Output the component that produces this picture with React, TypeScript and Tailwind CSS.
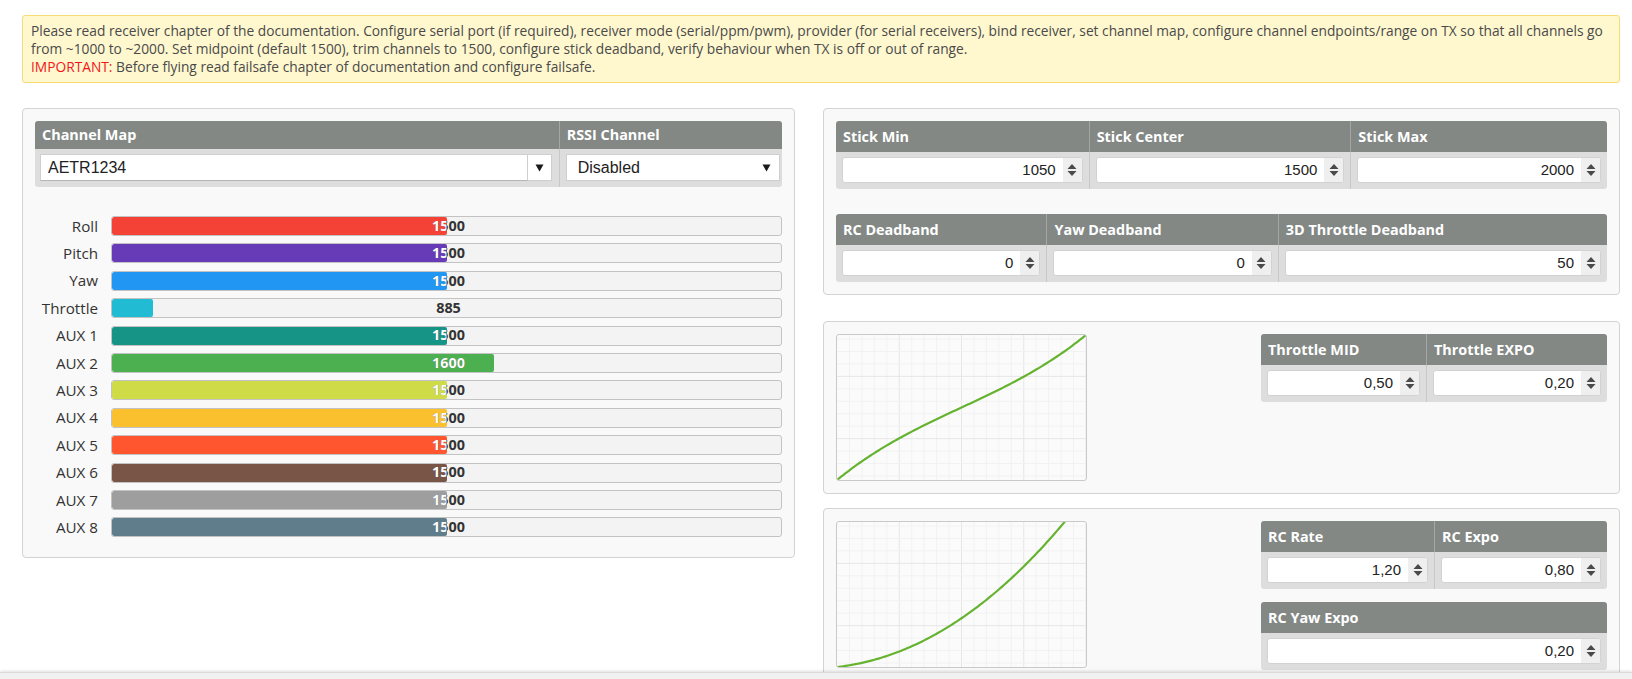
import React from 'react';

const RANGE_MIN = 800;
const RANGE_MAX = 2200;

const channels = [
  { name: 'Roll', value: 1500, color: '#f44336' },
  { name: 'Pitch', value: 1500, color: '#673ab7' },
  { name: 'Yaw', value: 1500, color: '#2196f3' },
  { name: 'Throttle', value: 885, color: '#21bcd4' },
  { name: 'AUX 1', value: 1500, color: '#169486' },
  { name: 'AUX 2', value: 1600, color: '#4caf50' },
  { name: 'AUX 3', value: 1500, color: '#cfdb47' },
  { name: 'AUX 4', value: 1500, color: '#fbc02d' },
  { name: 'AUX 5', value: 1500, color: '#ff5630' },
  { name: 'AUX 6', value: 1500, color: '#795548' },
  { name: 'AUX 7', value: 1500, color: '#9e9e9e' },
  { name: 'AUX 8', value: 1500, color: '#607d8b' },
];

const Spinner = () => (
  <div className="w-[19px] self-stretch bg-[#efefef] flex items-center justify-center">
    <svg width="10" height="14" viewBox="0 0 10 14">
      <path d="M5 1 L9.5 6 H0.5 Z" fill="#4a4a4a" />
      <path d="M0.5 8 H9.5 L5 13 Z" fill="#4a4a4a" />
    </svg>
  </div>
);

const NumInput = ({ value }: { value: string }) => (
  <div className="flex items-center justify-end h-[26px] bg-white border border-[#d2d2d2] rounded-[3px] overflow-hidden">
    <span className="pr-[7px] text-[15px] text-[#222] font-['Liberation_Sans',Arial,sans-serif]">{value}</span>
    <Spinner />
  </div>
);

const Caret = () => (
  <svg width="9" height="8" viewBox="0 0 9 8">
    <path d="M0.5 0.5 H8.5 L4.5 7.5 Z" fill="#1a1a1a" />
  </svg>
);

type Col = { title: string; value: string };

const FieldTable = ({ cols, grid }: { cols: Col[]; grid: string }) => (
  <div className="rounded-[3px] overflow-hidden">
    <div className={`grid ${grid} h-[31px] bg-[#838885]`}>
      {cols.map((c, i) => (
        <div
          key={c.title}
          className={`flex items-center pl-[7px] text-[14.4px] font-bold text-white ${i > 0 ? 'border-l border-[#a3a7a5]' : ''}`}
        >
          {c.title}
        </div>
      ))}
    </div>
    <div className={`grid ${grid} bg-[#dddddd]`}>
      {cols.map((c, i) => (
        <div
          key={c.title}
          className={`pt-[5px] pb-[6px] px-[6px] ${i > 0 ? 'border-l border-[#c8c8c8]' : ''}`}
        >
          <NumInput value={c.value} />
        </div>
      ))}
    </div>
  </div>
);

const ChannelBar = ({ name, value, color }: { name: string; value: number; color: string }) => {
  const pct = ((value - RANGE_MIN) / (RANGE_MAX - RANGE_MIN)) * 100;
  return (
    <div className="flex items-center gap-[13px] h-[20px] mb-[7.4px]">
      <div className="w-[63px] text-right text-[15.2px] text-[#333] whitespace-nowrap">{name}</div>
      <div className="relative flex-1 h-[20px] rounded-[3px] border border-[#c3c3c3] bg-[#f3f3f3] overflow-hidden">
        <div className="absolute left-0 top-0 bottom-0 rounded-[2px]" style={{ width: `${pct}%`, background: color }} />
        <div className="absolute inset-0 flex items-center justify-center pl-[4px] text-[14.4px] font-bold text-[#333] leading-none">
          {value}
        </div>
        <div
          className="absolute inset-0 flex items-center justify-center pl-[4px] text-[14.4px] font-bold text-white leading-none"
          style={{ clipPath: `inset(0 ${100 - pct}% 0 0)` }}
        >
          {value}
        </div>
      </div>
    </div>
  );
};

const W = 249;
const H = 145;
const MAJOR = W / 4;
const MINOR = MAJOR / 5;

const throttleCurve = (x: number) => {
  const mid = 0.5;
  const expo = 0.2;
  const d = x - mid;
  const den = x < mid ? mid * mid : (1 - mid) * (1 - mid);
  return mid + d * (1 - expo + (expo * d * d) / den);
};

const rateCurve = (x: number) => 0.1925 * x + 0.925 * x * x + 0.068 * x * x * x;

const Chart = ({ fn }: { fn: (x: number) => number }) => {
  const pts: string[] = [];
  for (let i = 0; i <= 120; i++) {
    const x = i / 120;
    const y = fn(x);
    pts.push(`${(x * W).toFixed(2)},${(H - y * H).toFixed(2)}`);
    if (y > 1.05) break;
  }
  const vLines: number[] = [];
  for (let x = MINOR; x < W; x += MINOR) vLines.push(x);
  const hStart = (H / 2 - MAJOR / 2) % MINOR;
  const hLines: number[] = [];
  for (let y = hStart; y < H; y += MINOR) hLines.push(y);
  const isMajorV = (x: number) => Math.abs(x / MAJOR - Math.round(x / MAJOR)) < 0.01;
  const isMajorH = (y: number) => {
    const r = (y - (H / 2 - MAJOR / 2)) / MAJOR;
    return Math.abs(r - Math.round(r)) < 0.01;
  };
  return (
    <div className="w-[251px] h-[147px] border border-[#c9c9c9] rounded-[3px] bg-[#fbfbfb] overflow-hidden">
      <svg width={W} height={H} viewBox={`0 0 ${W} ${H}`} className="block">
        {vLines.map((x) => (
          <line key={`v${x}`} x1={x} y1={0} x2={x} y2={H} stroke={isMajorV(x) ? '#e6e6e6' : '#f2f2f2'} strokeWidth={1} />
        ))}
        {hLines.map((y) => (
          <line key={`h${y}`} x1={0} y1={y} x2={W} y2={y} stroke={isMajorH(y) ? '#e6e6e6' : '#f2f2f2'} strokeWidth={1} />
        ))}
        <polyline points={pts.join(' ')} fill="none" stroke="#66b332" strokeWidth={2.2} strokeLinejoin="round" />
      </svg>
    </div>
  );
};

const Panel = ({ children, className = '' }: { children: React.ReactNode; className?: string }) => (
  <div className={`border border-[#d3d3d3] rounded-[4px] bg-[#f9f9f9] p-[12px] ${className}`}>{children}</div>
);

export default function App() {
  return (
    <div className="min-h-screen bg-white pl-[22px] pr-[12px] pt-[15px] font-['Open_Sans',sans-serif]">
      <div className="border border-[#f6dc77] bg-[#fff8cf] rounded-[3px] px-[8px] py-[6px] text-[13.75px] leading-[18px] text-[#4a4a4a] whitespace-nowrap">
        Please read receiver chapter of the documentation. Configure serial port (if required), receiver mode (serial/ppm/pwm), provider (for serial receivers), bind receiver, set channel map, configure channel endpoints/range on TX so that all channels go
        <br />
        from ~1000 to ~2000. Set midpoint (default 1500), trim channels to 1500, configure stick deadband, verify behaviour when TX is off or out of range.
        <br />
        <span className="text-[#f0151a]">IMPORTANT:</span> Before flying read failsafe chapter of documentation and configure failsafe.
      </div>

      <div className="flex items-start gap-[28px] mt-[25px]">
        <Panel className="w-[773px] shrink-0">
          <div className="rounded-[3px] overflow-hidden">
            <div className="grid grid-cols-[523fr_223fr] h-[28px] bg-[#838885] text-[14.4px] font-bold text-white">
              <div className="flex items-center pl-[7px]">Channel Map</div>
              <div className="flex items-center pl-[7px] border-l border-[#a3a7a5]">RSSI Channel</div>
            </div>
            <div className="grid grid-cols-[523fr_223fr] bg-[#dddddd] font-['Liberation_Sans',Arial,sans-serif] text-[16px] text-[#222]">
              <div className="pt-[5px] pb-[6px] pl-[5px] pr-[7px]">
                <div className="flex h-[27px]">
                  <div className="flex-1 flex items-center pl-[7px] bg-white border border-[#cfcfcf] border-b-[#b5b5b5]">AETR1234</div>
                  <div className="w-[24px] flex items-center justify-center bg-white border border-l-0 border-[#cfcfcf]">
                    <Caret />
                  </div>
                </div>
              </div>
              <div className="pt-[5px] pb-[6px] pl-[6px] pr-[2px] border-l border-[#c8c8c8]">
                <div className="flex items-center justify-between h-[27px] pl-[11px] pr-[8px] bg-white border border-[#cfcfcf]">
                  <span>Disabled</span>
                  <Caret />
                </div>
              </div>
            </div>
          </div>
          <div className="mt-[29px]">
            {channels.map((c) => (
              <ChannelBar key={c.name} {...c} />
            ))}
          </div>
        </Panel>

        <div className="flex-1 flex flex-col">
          <Panel className="mb-[26px]">
            <FieldTable
              grid="grid-cols-[253fr_262fr_257fr]"
              cols={[
                { title: 'Stick Min', value: '1050' },
                { title: 'Stick Center', value: '1500' },
                { title: 'Stick Max', value: '2000' },
              ]}
            />
            <div className="mt-[25px]">
              <FieldTable
                grid="grid-cols-[211fr_232fr_330fr]"
                cols={[
                  { title: 'RC Deadband', value: '0' },
                  { title: 'Yaw Deadband', value: '0' },
                  { title: '3D Throttle Deadband', value: '50' },
                ]}
              />
            </div>
          </Panel>

          <Panel className="mb-[14px] flex justify-between items-start">
            <Chart fn={throttleCurve} />
            <div className="w-[346px]">
              <FieldTable
                grid="grid-cols-[165fr_181fr]"
                cols={[
                  { title: 'Throttle MID', value: '0,50' },
                  { title: 'Throttle EXPO', value: '0,20' },
                ]}
              />
            </div>
          </Panel>

          <Panel className="flex justify-between items-start">
            <Chart fn={rateCurve} />
            <div className="w-[346px] flex flex-col gap-[13px]">
              <FieldTable
                grid="grid-cols-[173fr_173fr]"
                cols={[
                  { title: 'RC Rate', value: '1,20' },
                  { title: 'RC Expo', value: '0,80' },
                ]}
              />
              <FieldTable grid="grid-cols-1" cols={[{ title: 'RC Yaw Expo', value: '0,20' }]} />
            </div>
          </Panel>
        </div>
      </div>

      <div className="fixed left-0 right-0 bottom-0 h-[7px] bg-[#f1f1f1] border-t border-[#dadada] shadow-[0_-1px_3px_rgba(0,0,0,0.12)]" />
    </div>
  );
}
